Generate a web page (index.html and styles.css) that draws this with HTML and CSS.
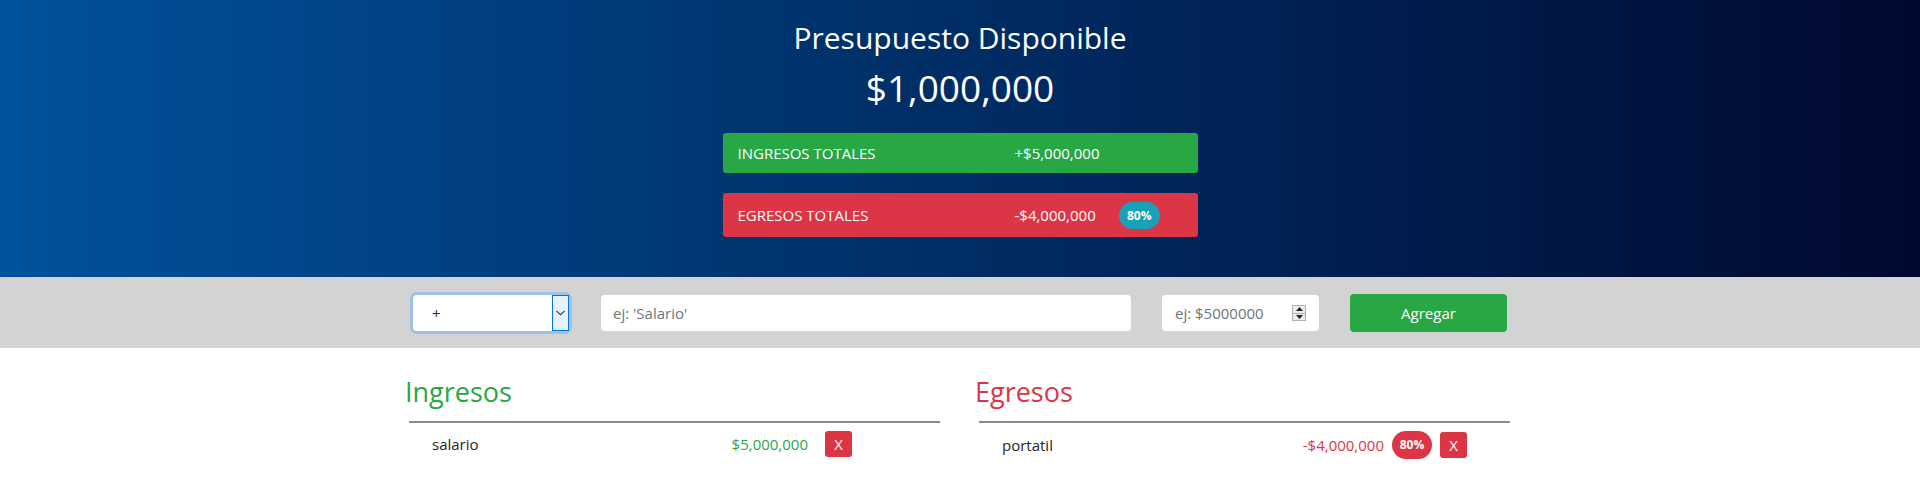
FILE: index.html
```html
<!DOCTYPE html>
<html lang="es">
<head>
<meta charset="utf-8">
<title>Presupuesto</title>
<link rel="stylesheet" href="styles.css">
</head>
<body>
<header class="top">
  <h1 class="top-title">Presupuesto Disponible</h1>
  <div class="top-amount">$1,000,000</div>
  <div class="total total-inc">
    <span class="total-label">INGRESOS TOTALES</span>
    <span class="total-value">+$5,000,000</span>
  </div>
  <div class="total total-exp">
    <span class="total-label">EGRESOS TOTALES</span>
    <span class="total-value">-$4,000,000</span>
    <span class="pill pill-info">80%</span>
  </div>
</header>

<section class="add">
  <form class="add-row">
    <div class="select-wrap">
      <select class="add-type">
        <option>+</option>
        <option>-</option>
      </select>
      <span class="select-arrow">
        <svg width="9" height="6" viewBox="0 0 9 6"><path d="M0.5 0.8 L4.5 4.8 L8.5 0.8" fill="none" stroke="#333" stroke-width="1.1"/></svg>
      </span>
    </div>
    <input class="field field-desc" type="text" placeholder="ej: 'Salario'">
    <div class="num-wrap">
      <input class="field field-num" type="number" placeholder="ej: $5000000">
      <span class="spinner">
        <span class="spin-btn"><svg width="7" height="4" viewBox="0 0 7 4"><path d="M0 4 L3.5 0 L7 4Z" fill="#222"/></svg></span>
        <span class="spin-btn"><svg width="7" height="4" viewBox="0 0 7 4"><path d="M0 0 L3.5 4 L7 0Z" fill="#222"/></svg></span>
      </span>
    </div>
    <button class="add-btn" type="button">Agregar</button>
  </form>
</section>

<main class="lists">
  <div class="list-col">
    <h2 class="list-title list-title-inc">Ingresos</h2>
    <ul class="list list-inc">
      <li class="item">
        <span class="item-name">salario</span>
        <span class="item-right">
          <span class="item-value value-inc">$5,000,000</span>
          <button class="del" type="button">X</button>
        </span>
      </li>
    </ul>
  </div>
  <div class="list-col">
    <h2 class="list-title list-title-exp">Egresos</h2>
    <ul class="list list-exp">
      <li class="item">
        <span class="item-name">portatil</span>
        <span class="item-right">
          <span class="item-value value-exp">-$4,000,000</span>
          <span class="pill pill-danger">80%</span>
          <button class="del" type="button">X</button>
        </span>
      </li>
    </ul>
  </div>
</main>
</body>
</html>
```

FILE: styles.css
```css
* { box-sizing: border-box; }

body {
  margin: 0;
  font-family: "Open Sans", "Noto Sans", "Liberation Sans", sans-serif;
  color: #212529;
  background: #fff;
}

/* ---------- header ---------- */
.top {
  background: linear-gradient(to right, #00529b, #002d65 50%, #000930);
  color: #fff;
  padding: 20px 0 40px;
  display: flex;
  flex-direction: column;
  align-items: center;
  height: 277px;
}

.top-title {
  margin: 0;
  font-size: 30px;
  font-weight: 400;
  line-height: 36px;
}

.top-amount {
  margin-top: 10px;
  font-size: 37px;
  line-height: 44px;
}

.total {
  width: 475px;
  display: flex;
  align-items: center;
  padding: 0 15px;
  border-radius: 3px;
  font-size: 15px;
  color: #fff;
}

.total-inc {
  margin-top: 23px;
  height: 40px;
  background: #28a745;
}

.total-exp {
  margin-top: 20px;
  height: 44px;
  background: #dc3545;
}

.total-label {
  width: 277px;
}

.pill {
  display: inline-flex;
  align-items: center;
  justify-content: center;
  width: 41px;
  height: 27px;
  border-radius: 14px;
  font-size: 12px;
  font-weight: 700;
  color: #fff;
}

.pill-info {
  margin-left: 23px;
  background: #17a2b8;
}

/* ---------- add bar ---------- */
.add {
  background: #d3d3d3;
  height: 71px;
  padding-top: 17px;
}

.add-row {
  width: 1094px;
  margin: 0 auto;
  display: flex;
  align-items: center;
  gap: 31px;
}

.select-wrap {
  position: relative;
  width: 156px;
  height: 36px;
  border-radius: 4px;
  box-shadow: 0 0 0 3px #9ec1ea;
  background: #fff;
}

.add-type {
  width: 100%;
  height: 100%;
  border: none;
  border-radius: 4px;
  background: transparent;
  padding: 0 0 0 19px;
  font-family: inherit;
  font-size: 15px;
  color: #212529;
  appearance: none;
  -webkit-appearance: none;
  outline: none;
}

.select-arrow {
  position: absolute;
  top: 0;
  right: 0;
  width: 17px;
  height: 36px;
  border: 1px solid #0078d7;
  background: #e5f1fb;
  display: flex;
  align-items: center;
  justify-content: center;
  pointer-events: none;
}

.field {
  height: 36px;
  border: none;
  border-radius: 4px;
  background: #fff;
  font-family: inherit;
  font-size: 15px;
  color: #495057;
  outline: none;
}

.field::placeholder {
  color: #6c757d;
}

.field-desc {
  width: 530px;
  padding: 0 12px;
  margin-left: 1px;
}

.num-wrap {
  position: relative;
  width: 157px;
  height: 36px;
}

.field-num {
  width: 100%;
  padding: 0 30px 0 13px;
  -moz-appearance: textfield;
}

.field-num::-webkit-inner-spin-button,
.field-num::-webkit-outer-spin-button {
  -webkit-appearance: none;
  margin: 0;
}

.spinner {
  position: absolute;
  top: 10px;
  right: 13px;
  width: 14px;
  height: 16px;
  display: flex;
  flex-direction: column;
  border: 1px solid #b0b0b0;
  background: #ececec;
}

.spin-btn {
  flex: 1;
  display: flex;
  align-items: center;
  justify-content: center;
}

.spin-btn + .spin-btn {
  border-top: 1px solid #b0b0b0;
}

.add-btn {
  width: 157px;
  height: 38px;
  border: none;
  border-radius: 4px;
  background: #28a745;
  color: #fff;
  font-family: inherit;
  font-size: 15px;
}

/* ---------- lists ---------- */
.lists {
  width: 1110px;
  margin: 0 auto;
  display: flex;
  gap: 30px;
  padding-top: 28px;
}

.list-col {
  flex: 1;
}

.list-title {
  margin: 0;
  font-size: 27px;
  font-weight: 400;
  line-height: 32px;
}

.list-title-inc { color: #28a745; }
.list-title-exp { color: #dc3545; }

.list {
  list-style: none;
  margin: 13px 5px 0 4px;
  padding: 0;
  border-top: 2px solid #8a8a8a;
}

.item {
  display: flex;
  align-items: center;
  padding: 8px 0 0 23px;
  font-size: 15px;
  line-height: 26px;
}

.list-inc .item { padding-right: 88px; }
.list-exp .item { padding-right: 43px; }

.item-name {
  flex: 1;
  color: #212529;
}

.item-right {
  display: flex;
  align-items: center;
}

.value-inc { color: #28a745; margin-right: 17px; }
.value-exp { color: #dc3545; }

.pill-danger {
  width: 40px;
  height: 28px;
  margin: 0 8px;
  background: #dc3545;
}

.del {
  width: 27px;
  height: 26px;
  border: none;
  border-radius: 3px;
  background: #dc3545;
  color: #fff;
  font-family: inherit;
  font-size: 15px;
  padding: 0;
}
```
